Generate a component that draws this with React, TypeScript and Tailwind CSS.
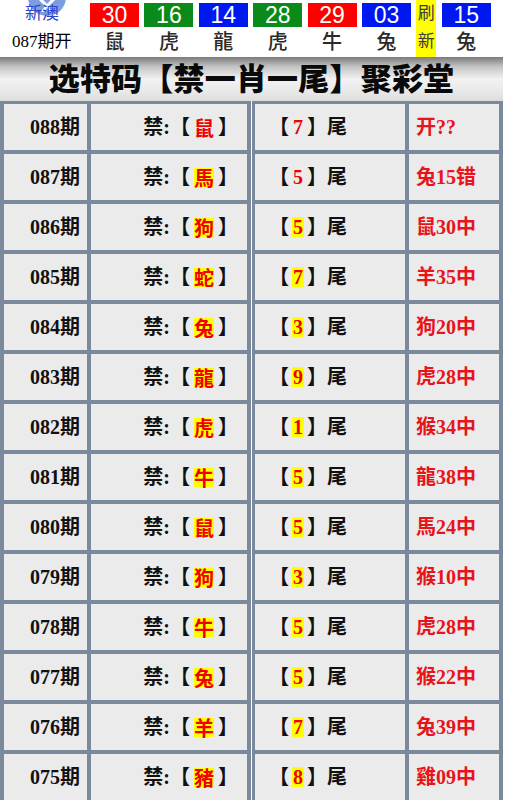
import React from "react";

const rows: [string, string, boolean, string, boolean, string][] = [
  ["088", "鼠", false, "7", false, "开??"],
  ["087", "馬", true, "5", false, "兔15错"],
  ["086", "狗", true, "5", true, "鼠30中"],
  ["085", "蛇", true, "7", true, "羊35中"],
  ["084", "兔", true, "3", true, "狗20中"],
  ["083", "龍", true, "9", true, "虎28中"],
  ["082", "虎", true, "1", true, "猴34中"],
  ["081", "牛", true, "5", true, "龍38中"],
  ["080", "鼠", true, "5", true, "馬24中"],
  ["079", "狗", true, "3", true, "猴10中"],
  ["078", "牛", true, "5", true, "虎28中"],
  ["077", "兔", true, "5", true, "猴22中"],
  ["076", "羊", true, "7", true, "兔39中"],
  ["075", "豬", true, "8", true, "雞09中"],
];

const balls: [string, string, string][] = [
  ["30", "bg-[#ff0000]", "鼠"],
  ["16", "bg-[#0a8a1a]", "虎"],
  ["14", "bg-[#0018f0]", "龍"],
  ["28", "bg-[#0a8a1a]", "虎"],
  ["29", "bg-[#ff0000]", "牛"],
  ["03", "bg-[#0018f0]", "兔"],
];

const serif = { fontFamily: '"Liberation Serif", "Noto Sans CJK SC", serif' };
const sans = { fontFamily: '"Liberation Sans", "Noto Sans CJK SC", sans-serif' };

function Ball({ n, bg, a }: { n: string; bg: string; a: string }) {
  return (
    <div className="flex w-[49px] flex-col items-center">
      <div
        className={`${bg} mt-[3px] flex h-[24px] w-[49px] items-center justify-center text-[23px] leading-none text-white`}
        style={sans}
      >
        {n}
      </div>
      <div className="mt-[2px] text-[20px] font-medium leading-[26px] text-[#2a2a2a]" style={sans}>
        {a}
      </div>
    </div>
  );
}

export default function App() {
  return (
    <div className="w-[506px] overflow-hidden bg-white">
      {/* header */}
      <div className="flex h-[57px]">
        <div className="relative flex w-[90px] flex-col items-start">
          <div className="absolute left-[28px] top-[-22px] h-[38px] w-[38px] rounded-full bg-[#5d86d6] opacity-80">
            <svg className="absolute left-[10px] top-[20px]" width="18" height="14" viewBox="0 0 18 14">
              <path d="M2 1 L9 8 L16 1" stroke="white" strokeWidth="3" fill="none" />
              <path d="M9 8 L4 14 M9 8 L14 14" stroke="white" strokeWidth="2.5" fill="none" />
            </svg>
          </div>
          <div className="relative ml-[25px] mt-[4px] text-[17px] leading-[20px] text-[#2a44cc]" style={sans}>
            新澳
          </div>
          <div className="ml-[12px] mt-[8px] text-[17px] leading-[20px] text-black" style={serif}>
            087期开
          </div>
        </div>
        <div className="flex gap-[5.4px]">
          {balls.map(([n, bg, a], i) => (
            <Ball key={i} n={n} bg={bg} a={a} />
          ))}
          <div
            className="flex h-[57px] w-[20px] flex-col items-center bg-[#ffff00] text-[17px] leading-[20px] text-[#3a3a3a]"
            style={sans}
          >
            <span className="mt-[4px]">刷</span>
            <span className="mt-[8px]">新</span>
          </div>
          <Ball n="15" bg="bg-[#0018f0]" a="兔" />
        </div>
      </div>

      {/* banner */}
      <div className="flex h-[44px] w-[503px] items-center justify-center bg-[linear-gradient(to_bottom,#7a7a7a_0%,#c4c4c4_22%,#f2f2f2_50%,#e8e8e8_80%,#dcdcdc_100%)]">
        <div
          className="mt-[-5px] text-[31px] font-black leading-none tracking-[0.2px] text-[#0a0a0a]"
          style={{ fontFamily: '"Noto Sans CJK SC", sans-serif' }}
        >
          选特码【禁一肖一尾】聚彩堂
        </div>
      </div>

      {/* table */}
      <div className="flex h-[699px] bg-white">
        <div className="grid w-[251px] grid-cols-[83px_156px] auto-rows-[46px] gap-[4px] bg-[#7a8a9c] px-[4px] pt-[3px]">
          {rows.map((r) => (
            <React.Fragment key={r[0]}>
              <div
                className="flex items-center justify-end bg-[#ebebeb] pr-[7px] text-[20px] font-bold text-[#111]"
                style={serif}
              >
                {r[0]}期
              </div>
              <div
                className="flex items-center justify-end bg-[#ebebeb] pr-[9px] text-[20px] font-bold text-[#111]"
                style={serif}
              >
                <span>禁:【</span>
                <span
                  className={`mx-[4px] leading-[19px] text-[#f00000] ${r[2] ? "bg-[#ffff00]" : ""}`}
                  style={{ fontFamily: '"Noto Sans CJK TC", "Noto Sans CJK SC", sans-serif' }}
                >
                  {r[1]}
                </span>
                <span>】</span>
              </div>
            </React.Fragment>
          ))}
        </div>
        <div className="ml-[1px] grid w-[251px] grid-cols-[150px_90px] auto-rows-[46px] gap-[4px] bg-[#7a8a9c] pl-[3px] pr-[4px] pt-[3px]">
          {rows.map((r) => (
            <React.Fragment key={r[0]}>
              <div
                className="flex items-center bg-[#ebebeb] pl-[14px] text-[20px] font-bold text-[#111]"
                style={serif}
              >
                <span>【</span>
                <span
                  className={`mx-[3px] px-[1px] leading-[20px] text-[#f00000] ${r[4] ? "bg-[#ffff00]" : ""}`}
                >
                  {r[3]}
                </span>
                <span>】尾</span>
              </div>
              <div
                className="flex items-center bg-[#ebebeb] pl-[7px] text-[20px] font-bold text-[#e8141c]"
                style={serif}
              >
                {r[5]}
              </div>
            </React.Fragment>
          ))}
        </div>
      </div>
    </div>
  );
}
